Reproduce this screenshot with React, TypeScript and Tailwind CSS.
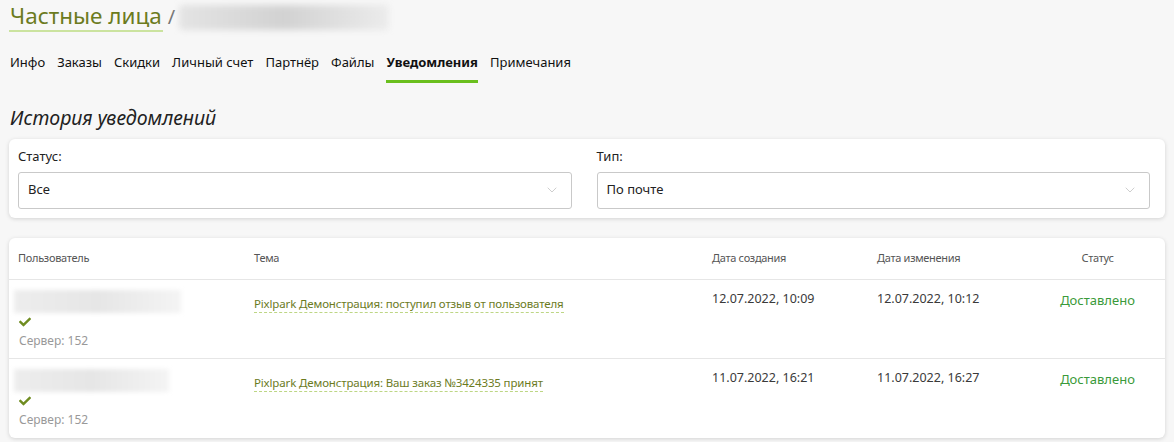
import { ChevronDown } from "lucide-react";
import { FaCheck } from "react-icons/fa";

const tabs = ["Инфо", "Заказы", "Скидки", "Личный счет", "Партнёр", "Файлы", "Уведомления", "Примечания"];

const rows = [
  {
    blur: "w-[167px]",
    topic: "Pixlpark Демонстрация: поступил отзыв от пользователя",
    created: "12.07.2022, 10:09",
    updated: "12.07.2022, 10:12",
  },
  {
    blur: "w-[155px]",
    topic: "Pixlpark Демонстрация: Ваш заказ №3424335 принят",
    created: "11.07.2022, 16:21",
    updated: "11.07.2022, 16:27",
  },
];

function Select({ label, value }: { label: string; value: string }) {
  return (
    <div className="flex-1">
      <div className="text-[13px] text-[#222] leading-[18px] mb-[7px]">{label}</div>
      <div className="h-[37px] border border-[#c9c9c9] rounded-[3px] bg-white flex items-center justify-between pl-[9px] pr-[11px]">
        <span className="text-[13px] text-[#222]">{value}</span>
        <ChevronDown size={16} strokeWidth={1} className="text-[#b5b5b5]" />
      </div>
    </div>
  );
}

export default function App() {
  return (
    <div className="min-h-screen bg-[#f7f7f7] px-[9px] pt-[2px] font-['Noto_Sans',sans-serif] text-[#222]">
      {/* Header */}
      <div className="flex items-center h-[30px]">
        <h1 className="text-[22.5px] leading-[28px] text-[#6c7b1e] border-b-2 border-[#cbe39f] px-[1px]">Частные лица</h1>
        <span className="text-[20px] text-[#777] ml-[5px]">/</span>
        <div className="ml-[4px] h-[25px] w-[210px] rounded bg-gradient-to-r from-[#e4e4e4] via-[#d2d2d2] to-[#ececec] blur-[3px]" />
      </div>

      {/* Tabs */}
      <nav className="flex gap-[12px] mt-[21px] pl-[1px]">
        {tabs.map((t) => (
          <div
            key={t}
            className={
              t === "Уведомления"
                ? "text-[13px] font-bold text-[#111] pb-[7px] border-b-[3px] border-[#6abf1e]"
                : "text-[13px] text-[#111] pb-[7px] border-b-[3px] border-transparent"
            }
          >
            {t}
          </div>
        ))}
      </nav>

      <h2 className="mt-[22px] text-[19.5px] italic text-[#222] leading-[26px] pl-[1px]">История уведомлений</h2>

      {/* Filters */}
      <div className="mt-[8px] bg-white rounded-[6px] shadow-[0_1px_4px_rgba(0,0,0,0.15)] pl-[9px] pr-[15px] pt-[8px] pb-[9px] flex gap-[25px]">
        <Select label="Статус:" value="Все" />
        <Select label="Тип:" value="По почте" />
      </div>

      {/* Table */}
      <div className="mt-[20px] bg-white rounded-[6px] shadow-[0_1px_4px_rgba(0,0,0,0.15)]">
        <div className="grid grid-cols-[245px_458px_165px_155px_1fr] h-[42px] items-center border-b border-[#e6e6e6] text-[11px] tracking-[-0.3px] text-[#555]">
          <div className="pl-[9px]">Пользователь</div>
          <div>Тема</div>
          <div>Дата создания</div>
          <div>Дата изменения</div>
          <div className="text-center pr-[2px]">Статус</div>
        </div>
        {rows.map((r, i) => (
          <div
            key={i}
            className={
              i === 0
                ? "grid grid-cols-[245px_458px_165px_155px_1fr] h-[79px] border-b border-[#e6e6e6]"
                : "grid grid-cols-[245px_458px_165px_155px_1fr] h-[79px]"
            }
          >
            <div className="pl-[5px] pt-[10px]">
              <div className={`${r.blur} h-[23px] bg-gradient-to-r from-[#ededed] via-[#e6e6e6] to-[#f4f4f4] blur-[2px]`} />
              <FaCheck className="text-[#6f8c20] ml-[5px] mt-[3px]" size={12} />
              <div className="text-[12px] text-[#999] ml-[5px] mt-[4px]">Сервер: 152</div>
            </div>
            <div className="pt-[10px]">
              <span className="text-[11.5px] tracking-[-0.15px] text-[#6c7b1e] border-b border-dashed border-[#bdd684] pb-[1px]">{r.topic}</span>
            </div>
            <div className="pt-[10px] text-[12.5px] text-[#3a3a3a]">{r.created}</div>
            <div className="pt-[10px] text-[12.5px] text-[#3a3a3a]">{r.updated}</div>
            <div className="pt-[11px] text-center pr-[2px] text-[13px] text-[#3a9a3a]">Доставлено</div>
          </div>
        ))}
      </div>
    </div>
  );
}
